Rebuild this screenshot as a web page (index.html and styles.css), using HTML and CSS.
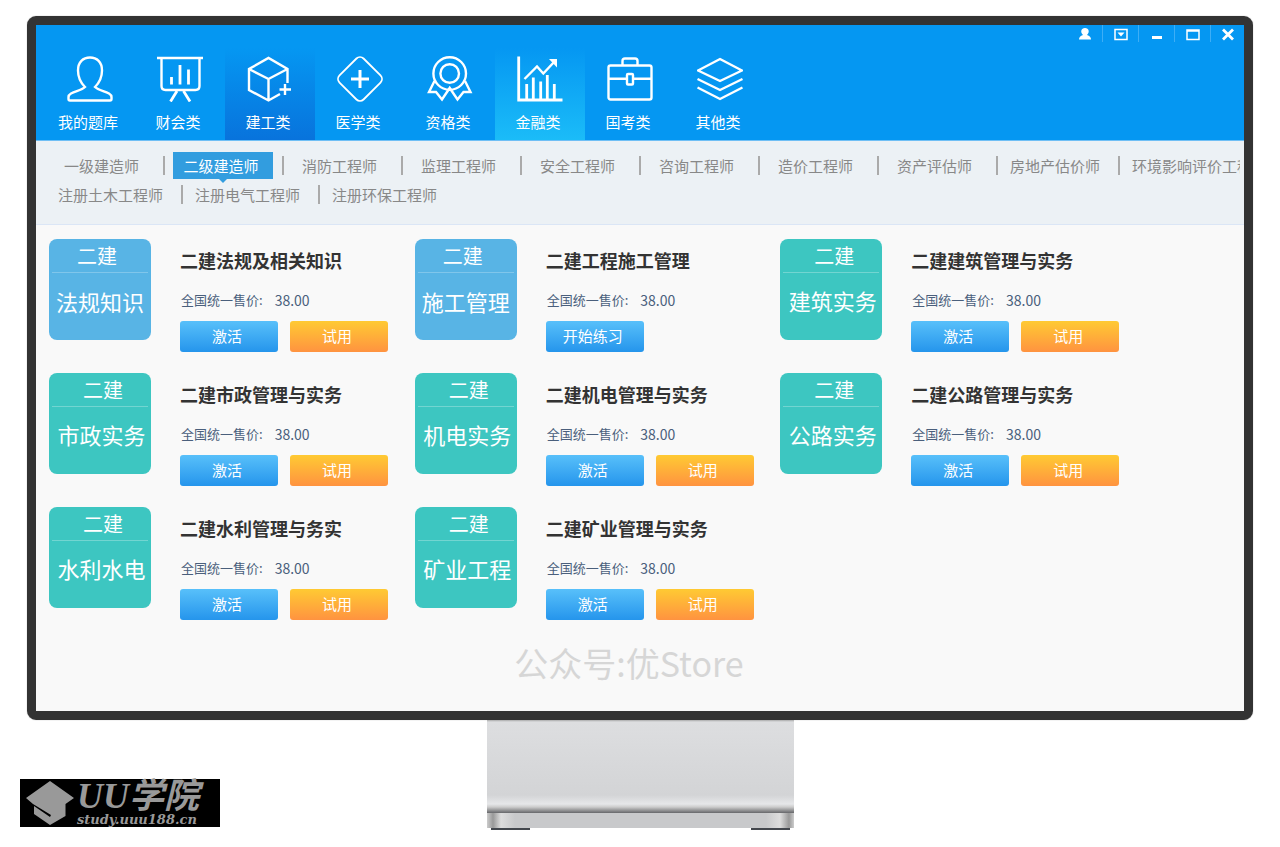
FILE: index.html
```html
<!DOCTYPE html>
<html lang="zh-CN">
<head>
<meta charset="utf-8">
<title>二级建造师题库</title>
<link rel="stylesheet" href="styles.css">
</head>
<body>
<div class="monitor">
  <div class="screen">
    <header class="header">
      <nav class="nav">
        <a class="nav-item" href="#"><svg class="nav-icon" viewBox="0 0 46 46"><path d="M18 31C13 26 11 22 11 14.500C11 6 16 1.500 23 1.500S35 6 35 14.500C35 22 33 26 28 31C31 34 37 35 42 37.500Q44.500 39 44.500 41V43Q44.500 44.500 43 44.500H3Q1.500 44.500 1.500 43V41Q1.500 39 4 37.500C9 35 15 34 18 31Z"/></svg><span class="nav-label">我的题库</span></a>
        <a class="nav-item" href="#"><svg class="nav-icon" viewBox="0 0 46 46"><path d="M0 2H46M4.500 2V30Q4.500 34 8.500 34H38.500Q42.500 34 42.500 30V2"/><path class="thick" d="M14.500 21V28.500M23 9V28.500M31.500 13.500V28.500M20 35L13.500 45.500M26.500 35L33 45.500"/></svg><span class="nav-label">财会类</span></a>
        <a class="nav-item nav-item-active" href="#"><svg class="nav-icon" viewBox="0 0 46 46"><path d="M40.500 27V13L21.500 2L2 13V34L21.500 44.500L33 38M2 13L21.500 23L40.500 13M21.500 23V44.500M38 28V39M32.500 33.500H44"/></svg><span class="nav-label">建工类</span></a>
        <a class="nav-item" href="#"><svg class="nav-icon" viewBox="0 0 46 46"><rect class="thin" x="6" y="6" width="34" height="34" rx="5" transform="rotate(45 23 23)"/><path class="heavy" d="M23 14V32M14 23H32"/></svg><span class="nav-label">医学类</span></a>
        <a class="nav-item" href="#"><svg class="nav-icon" viewBox="0 0 46 46"><circle cx="22.700" cy="17.500" r="16.300"/><circle cx="22.700" cy="17.500" r="9.300"/><path d="M7.500 25L2 36L9 36L15 43.500L22.700 32L30.500 43.500L36.500 36L43.500 36L38 25"/></svg><span class="nav-label">资格类</span></a>
        <a class="nav-item nav-item-hot" href="#"><svg class="nav-icon" viewBox="0 0 46 46"><path class="thick" d="M1.700 .5V44H45.500M9.700 28V43M16.300 21.500V43M23.700 25.500V43M30.300 19V43M37.300 28V43"/><path d="M7.500 23L20 10.500L26.300 17.500L38 5"/><path class="solid" d="M32 3H40V11.500Z"/></svg><span class="nav-label">金融类</span></a>
        <a class="nav-item" href="#"><svg class="nav-icon" viewBox="0 0 46 46"><rect x="1.500" y="9.500" width="43" height="34" rx="2"/><path d="M15.500 9V5Q15.500 2.500 18 2.500H28Q30.500 2.500 30.500 5V9M2 22.700H19.500M26.500 22.700H44"/><rect x="20" y="18" width="6" height="10.500" rx="1"/></svg><span class="nav-label">国考类</span></a>
        <a class="nav-item" href="#"><svg class="nav-icon" viewBox="0 0 46 46"><path d="M23 3L45 14.500L23 25L1 14.500ZM.500 23L23 34L45.500 23M.500 31.500L23 43L45.500 31.500"/></svg><span class="nav-label">其他类</span></a>
      </nav>
      <div class="window-controls">
        <button class="window-button" aria-label="账户"><svg viewBox="0 0 14 14"><path class="solid" d="M5 8C2 5 3 1 7 1S12 5 9 8Q13 9 13 12.500H1Q1 9 5 8Z"/></svg></button>
        <button class="window-button" aria-label="菜单"><svg viewBox="0 0 14 14"><path d="M1 2.500H13V12.500H1Z"/><path class="solid" d="M3.500 5.500H10.500L7 9.500Z"/></svg></button>
        <button class="window-button" aria-label="最小化"><svg viewBox="0 0 14 14"><path class="heavy" d="M2 10.500H12"/></svg></button>
        <button class="window-button" aria-label="最大化"><svg viewBox="0 0 14 14"><path d="M1 3H13V12.500H1ZM1 4H13"/></svg></button>
        <button class="window-button" aria-label="关闭"><svg viewBox="0 0 14 14"><path class="thick" d="M2 2.500L12 12.500M12 2.500L2 12.500"/></svg></button>
      </div>
    </header>
    <nav class="subnav">
      <div class="subnav-row">
        <a class="subnav-item" href="#">一级建造师</a>
        <a class="subnav-item" href="#"><span class="subnav-current">二级建造师</span></a>
        <a class="subnav-item" href="#">消防工程师</a>
        <a class="subnav-item" href="#">监理工程师</a>
        <a class="subnav-item" href="#">安全工程师</a>
        <a class="subnav-item" href="#">咨询工程师</a>
        <a class="subnav-item" href="#">造价工程师</a>
        <a class="subnav-item" href="#">资产评估师</a>
        <a class="subnav-item" href="#">房地产估价师</a>
        <a class="subnav-item" href="#">环境影响评价工程师</a>
      </div>
      <div class="subnav-row">
        <a class="subnav-item" href="#">注册土木工程师</a>
        <a class="subnav-item" href="#">注册电气工程师</a>
        <a class="subnav-item" href="#">注册环保工程师</a>
      </div>
    </nav>
    <main class="courses">
      <article class="course">
        <div class="tile tile-blue"><span class="tile-head">二建</span><span class="tile-name">法规知识</span></div>
        <div class="course-info"><h2 class="course-title">二建法规及相关知识</h2><p class="price">全国统一售价:<span class="amount">38.00</span></p>
          <div class="actions"><button class="button">激活</button><button class="button button-trial">试用</button></div></div>
      </article>
      <article class="course">
        <div class="tile tile-blue"><span class="tile-head">二建</span><span class="tile-name">施工管理</span></div>
        <div class="course-info"><h2 class="course-title">二建工程施工管理</h2><p class="price">全国统一售价:<span class="amount">38.00</span></p>
          <div class="actions"><button class="button">开始练习</button></div></div>
      </article>
      <article class="course">
        <div class="tile"><span class="tile-head">二建</span><span class="tile-name">建筑实务</span></div>
        <div class="course-info"><h2 class="course-title">二建建筑管理与实务</h2><p class="price">全国统一售价:<span class="amount">38.00</span></p>
          <div class="actions"><button class="button">激活</button><button class="button button-trial">试用</button></div></div>
      </article>
      <article class="course">
        <div class="tile"><span class="tile-head">二建</span><span class="tile-name">市政实务</span></div>
        <div class="course-info"><h2 class="course-title">二建市政管理与实务</h2><p class="price">全国统一售价:<span class="amount">38.00</span></p>
          <div class="actions"><button class="button">激活</button><button class="button button-trial">试用</button></div></div>
      </article>
      <article class="course">
        <div class="tile"><span class="tile-head">二建</span><span class="tile-name">机电实务</span></div>
        <div class="course-info"><h2 class="course-title">二建机电管理与实务</h2><p class="price">全国统一售价:<span class="amount">38.00</span></p>
          <div class="actions"><button class="button">激活</button><button class="button button-trial">试用</button></div></div>
      </article>
      <article class="course">
        <div class="tile"><span class="tile-head">二建</span><span class="tile-name">公路实务</span></div>
        <div class="course-info"><h2 class="course-title">二建公路管理与实务</h2><p class="price">全国统一售价:<span class="amount">38.00</span></p>
          <div class="actions"><button class="button">激活</button><button class="button button-trial">试用</button></div></div>
      </article>
      <article class="course">
        <div class="tile"><span class="tile-head">二建</span><span class="tile-name">水利水电</span></div>
        <div class="course-info"><h2 class="course-title">二建水利管理与务实</h2><p class="price">全国统一售价:<span class="amount">38.00</span></p>
          <div class="actions"><button class="button">激活</button><button class="button button-trial">试用</button></div></div>
      </article>
      <article class="course">
        <div class="tile"><span class="tile-head">二建</span><span class="tile-name">矿业工程</span></div>
        <div class="course-info"><h2 class="course-title">二建矿业管理与实务</h2><p class="price">全国统一售价:<span class="amount">38.00</span></p>
          <div class="actions"><button class="button">激活</button><button class="button button-trial">试用</button></div></div>
      </article>
    </main>
    <p class="watermark">公众号:优Store</p>
  </div>
</div>
<footer class="desk">
  <div class="logo">
    <svg class="logo-cap" viewBox="0 0 50 48"><path d="M25 2L49 19L40.500 25V37L25 46L9 35V27L25 38L26 36L8 25L1 19Z"/></svg>
    <div class="logo-text"><span class="logo-name">UU<span class="logo-cn">学院</span></span><span class="logo-url">study.uuu188.cn</span></div>
  </div>
  <div class="stand">
    <div class="stand-neck"></div>
    <div class="stand-base"></div>
    <div class="stand-feet"></div>
  </div>
</footer>
</body>
</html>
```

FILE: styles.css
```css
* {
  box-sizing: border-box;
}

body {
  margin: 0;
  padding: 16px 27px 0;
  background: #fff;
  color: #333;
  font-family: "Noto Sans CJK SC", sans-serif;
}

a {
  color: inherit;
  text-decoration: none;
}

button {
  padding: 0;
  border: 0;
  background: none;
  color: #fff;
  font-family: inherit;
  cursor: pointer;
}

svg {
  fill: none;
  stroke: #fff;
  stroke-width: 2.4;
}

.thin {
  stroke-width: 1.8;
}

.thick {
  stroke-width: 2.8;
}

.heavy {
  stroke-width: 3;
}

.solid {
  fill: #fff;
  stroke: none;
}

.monitor {
  border: 9px solid #333;
  border-radius: 9px;
  box-shadow: 0 0 1px #888;
}

.screen {
  overflow: hidden;
  background: #f9f9f9;
}

.header {
  display: flex;
  justify-content: space-between;
  align-items: flex-start;
  border-bottom: 1px solid #6fbff5;
  background: #0597f2;
}

.nav {
  display: flex;
  padding: 23px 0 0 9px;
}

.nav-item {
  display: flex;
  flex-direction: column;
  align-items: center;
  width: 90px;
  height: 92px;
  padding-top: 8px;
  color: #fff;
  font-size: 15px;
  line-height: 24px;
}

.nav-item-active {
  background: linear-gradient(#0597f2, #0873dc);
}

.nav-item-hot {
  background: linear-gradient(#0597f2, #1bbcf8);
}

.nav-icon {
  width: 46px;
  height: 46px;
  margin-bottom: 8px;
}

.nav-label {
  padding-right: 4px;
}

.window-controls {
  display: flex;
}

.window-button {
  width: 36px;
  height: 17px;
  border-right: 1px solid #3daef6;
}

.window-button:last-child {
  width: 33px;
  border-right: 0;
}

.window-button svg {
  display: block;
  width: 14px;
  height: 14px;
  margin: 0 auto;
  stroke-width: 1.5;
}

.subnav {
  height: 84px;
  padding: 10px 4px 0 10px;
  border-bottom: 1px solid #dbe6f6;
  background: #ecf1f5;
  color: #888;
  font-size: 15px;
}

.subnav-row {
  display: flex;
  align-items: center;
  height: 29px;
  overflow-x: clip;
}

.subnav-item {
  flex: none;
  min-width: 119px;
  padding: 0 18px 0 12px;
  border-right: 2px solid #aaa;
  line-height: 19px;
  text-align: center;
  white-space: nowrap;
}

.subnav-item:last-child {
  border-right: 0;
}

.subnav-current {
  position: relative;
  display: block;
  margin: -4px -9px -4px -4px;
  padding-right: 4px;
  background: #329ddf;
  color: #fff;
  line-height: 27px;
}

.subnav-current::after {
  content: "";
  position: absolute;
  top: 100%;
  left: 50%;
  margin-left: -4px;
  border: 4px solid transparent;
  border-top-color: #329ddf;
  border-bottom: 0;
}

.courses {
  display: grid;
  grid-template-columns: repeat(3, 1fr);
  row-gap: 21px;
  padding: 14px 98px 0 13px;
}

.course {
  display: flex;
  align-items: flex-start;
  gap: 29px;
}

.tile {
  display: flex;
  flex: none;
  flex-direction: column;
  align-items: center;
  width: 102px;
  height: 101px;
  padding: 0 3px;
  border-radius: 8px;
  background: #3dc6c1;
  color: #fff;
}

.tile-head {
  align-self: stretch;
  padding-left: 6px;
  border-bottom: 1px solid #72d5d1;
  font-size: 20px;
  line-height: 33px;
  text-align: center;
}

.tile-name {
  padding-left: 3px;
  font-size: 22px;
  line-height: 55px;
}

.tile-blue {
  background: #58b4e5;
}

.tile-blue .tile-head {
  padding: 0 6px 0 0;
  border-bottom-color: #80c6eb;
}

.tile-blue .tile-name {
  padding-left: 0;
  line-height: 57px;
}

.course-title {
  margin: 8px 0 0;
  font-size: 18px;
  line-height: 26px;
}

.price {
  display: flex;
  gap: 12px;
  margin: 14px 0 0;
  padding-left: 1px;
  color: #4a5f7c;
  font-size: 13px;
  line-height: 26px;
}

.amount {
  font-size: 14px;
}

.actions {
  display: flex;
  gap: 12px;
  margin-top: 8px;
}

.button {
  width: 98px;
  height: 31px;
  padding: 0 4px 3px 0;
  border-radius: 3px;
  background: linear-gradient(#58c0fa, #2595ec);
  font-size: 15px;
}

.button-trial {
  background: linear-gradient(#ffca33, #ff9340);
}

.watermark {
  margin: 19px 0 24px;
  padding-right: 22px;
  color: #d6d6d6;
  font-size: 34px;
  line-height: 48px;
  text-align: center;
}

.desk {
  display: grid;
  grid-template-columns: 1fr 307px 1fr;
  align-items: end;
}

.logo {
  display: flex;
  width: 200px;
  height: 48px;
  margin: 0 0 3px -7px;
  padding-left: 5px;
  background: #000;
  color: #999;
}

.logo-cap {
  width: 50px;
  height: 48px;
  fill: #999;
  stroke: none;
}

.logo-text {
  display: flex;
  flex-direction: column;
  padding-left: 2px;
  font-family: "Liberation Serif", "Noto Sans CJK SC", serif;
  font-style: italic;
  font-weight: bold;
}

.logo-name {
  font-size: 36px;
  line-height: 34px;
  white-space: nowrap;
}

.logo-cn {
  font-size: 35px;
}

.logo-url {
  font-family: "DejaVu Serif", serif;
  font-size: 13px;
  line-height: 12px;
}

.stand {
  display: flex;
  flex-direction: column;
}

.stand-neck {
  height: 93px;
  background: linear-gradient(#aaa 0, #dddee0 2px, #d3d4d6 75px, #e6e7e9 84px, #ccc 87px, #66676a 93px);
}

.stand-base {
  height: 15px;
  background: linear-gradient(90deg, #ccc 0, #999 6px, #ddd 14px, #c8c9cb 28px, #c8c9cb 279px, #ddd 293px, #999 302px, #ccc 100%);
}

.stand-feet {
  height: 2px;
  margin: 0 4px;
  background: linear-gradient(90deg, #43474d 39px, #fff 39px, #fff 260px, #43474d 260px);
}
```
